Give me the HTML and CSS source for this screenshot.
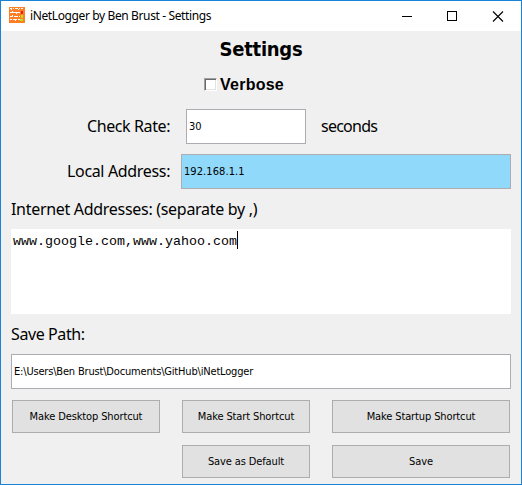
FILE: index.html
```html
<!DOCTYPE html>
<html lang="en">
<head>
<meta charset="utf-8">
<title>iNetLogger by Ben Brust - Settings</title>
<link rel="stylesheet" href="styles.css">
</head>
<body>
<div class="window">
  <header class="titlebar">
    <svg class="app-icon" width="16" height="16" viewBox="0 0 16 16" shape-rendering="crispEdges">
      <path fill="#ff7f27" d="M0 0h16v16H0z"/>
      <path stroke="#fff" fill="none" d="M1 1.5h2M4 1.5h1M6 1.5h3M10 1.5h1M12 1.5h2M2 2.5h1M9 2.5h1M1 5.5h10M3 4.5h1M7 6.5h1M1 9.5h3M5 9.5h4M10 9.5h1M3 8.5h1M1 12.5h2M4 12.5h4M9 12.5h2M6 13.5h1"/>
      <path fill="#ed1c24" d="M12 4h2v3h-2z"/>
      <path fill="#b5e61d" d="M12 8h2v3h-2zM11 12h3v2h-3z"/>
    </svg>
    <span class="caption">iNetLogger by Ben Brust - Settings</span>
    <svg class="controls" width="138" height="29" viewBox="0 0 138 29" shape-rendering="crispEdges" fill="none" stroke="#000">
      <path d="M19 14.5h10"/>
      <path d="M64.500 9.500h9v9h-9z"/>
      <path shape-rendering="auto" stroke-width="1.100" d="M110 9.500l10 10M120 9.500l-10 10"/>
    </svg>
  </header>
  <main class="content">
    <h1 class="heading">Settings</h1>
    <div class="verbose"><span class="check"></span><span class="verbose-text">Verbose</span></div>
    <div class="row rate">
      <span class="label rate-label">Check Rate:</span>
      <div class="field rate-field"><span>30</span></div>
      <span class="label seconds">seconds</span>
    </div>
    <div class="row address">
      <span class="label address-label">Local Address:</span>
      <div class="field address-field"><span>192.168.1.1</span></div>
    </div>
    <div class="label internet">Internet Addresses: (separate by ,)</div>
    <div class="textarea"><span class="typed">www.google.com,www.yahoo.com</span><i class="caret"></i></div>
    <div class="label save-path">Save Path:</div>
    <div class="field path-field"><span>E:\Users\Ben Brust\Documents\GitHub\iNetLogger</span></div>
    <div class="buttons">
      <div class="button">Make Desktop Shortcut</div>
      <div class="button">Make Start Shortcut</div>
      <div class="button">Make Startup Shortcut</div>
      <div class="button second">Save as Default</div>
      <div class="button">Save</div>
    </div>
  </main>
</div>
</body>
</html>
```
FILE: styles.css
```css
* { box-sizing: border-box; }
body { margin: 0; color: #000; font-family: "Noto Sans", sans-serif; }
.window { width: 522px; height: 485px; border: 1px solid #1883d7; background: #f0f0f0; overflow: hidden; white-space: nowrap; }
.titlebar { display: flex; align-items: center; height: 30px; padding-left: 8px; background: #fff; }
.app-icon { flex: none; margin-bottom: 2px; }
.caption { margin-left: 5px; font-size: 12px; line-height: 28px; letter-spacing: -0.380px; }
.controls { margin-left: auto; }
.content { padding: 0 10px; }
.heading { margin: 0; height: 36px; font: bold 20px/36px "DejaVu Sans Condensed", sans-serif; letter-spacing: -0.250px; text-align: center; }
.verbose { display: flex; align-items: center; height: 34px; padding-left: 193px; }
.check { width: 13px; height: 13px; background: #fff; border: 1px solid; border-color: #a0a0a0 #fff #fff #a0a0a0; box-shadow: inset 1px 1px #696969, inset -1px -1px #e3e3e3; }
.verbose-text { margin-left: 3px; padding-top: 1px; font: bold 16px/18px "Liberation Sans", sans-serif; letter-spacing: 0.250px; }
.row { display: flex; align-items: center; height: 35px; }
.label { font-size: 16px; line-height: 22px; letter-spacing: -0.300px; }
.rate { margin-top: 8px; }
.rate-label { width: 175px; padding: 0 0 2px 76px; letter-spacing: -0.400px; }
.seconds { margin-left: 15px; padding-bottom: 2px; letter-spacing: -0.750px; }
.address { margin-top: 10px; }
.address-label { width: 170px; padding: 0 0 2px 56px; letter-spacing: -0.340px; }
.field { display: flex; align-items: center; height: 35px; padding-left: 2px; background: #fff; border: 1px solid #abadb3; font: 11px/14px "DejaVu Sans Condensed", sans-serif; }
.rate-field { width: 120px; }
.address-field { width: 330px; background: #91d9fa; letter-spacing: 0.080px; }
.internet { height: 40px; line-height: 40px; }
.textarea { display: flex; align-items: flex-start; width: 500px; height: 85px; padding: 2px; background: #fff; font: 13.330px/18px "Liberation Mono", monospace; }
.typed { padding-top: 2px; }
.caret { width: 1px; height: 18px; background: #000; }
.save-path { height: 40px; line-height: 40px; letter-spacing: -0.400px; }
.path-field { width: 500px; letter-spacing: -0.180px; }
.buttons { display: grid; grid-template-columns: 148px 128px 178px; column-gap: 22px; grid-auto-rows: 33px; row-gap: 12px; margin: 11px 0 0 1px; }
.button { border: 1px solid #adadad; background: #e1e1e1; text-align: center; font: 11px/31px "DejaVu Sans Condensed", sans-serif; letter-spacing: -0.120px; }
.second { grid-column: 2; }
```
